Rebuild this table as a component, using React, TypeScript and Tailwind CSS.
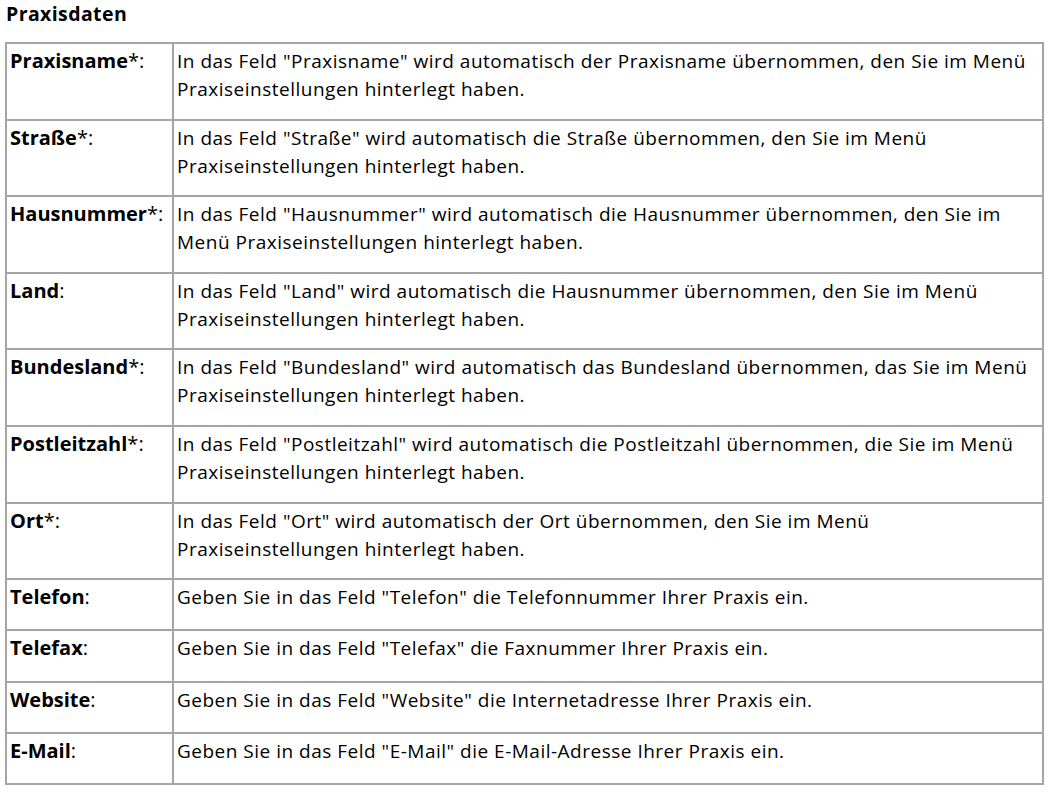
const rows: { label: string; mark: string; text: string; long?: boolean }[] = [
  { label: "Praxisname", mark: "*:", long: true, text: 'In das Feld "Praxisname" wird automatisch der Praxisname übernommen, den Sie im Menü Praxiseinstellungen hinterlegt haben.' },
  { label: "Straße", mark: "*:", long: true, text: 'In das Feld "Straße" wird automatisch die Straße übernommen, den Sie im Menü Praxiseinstellungen hinterlegt haben.' },
  { label: "Hausnummer", mark: "*:", long: true, text: 'In das Feld "Hausnummer" wird automatisch die Hausnummer übernommen, den Sie im Menü Praxiseinstellungen hinterlegt haben.' },
  { label: "Land", mark: ":", long: true, text: 'In das Feld "Land" wird automatisch die Hausnummer übernommen, den Sie im Menü Praxiseinstellungen hinterlegt haben.' },
  { label: "Bundesland", mark: "*:", long: true, text: 'In das Feld "Bundesland" wird automatisch das Bundesland übernommen, das Sie im Menü Praxiseinstellungen hinterlegt haben.' },
  { label: "Postleitzahl", mark: "*:", long: true, text: 'In das Feld "Postleitzahl" wird automatisch die Postleitzahl übernommen, die Sie im Menü Praxiseinstellungen hinterlegt haben.' },
  { label: "Ort", mark: "*:", long: true, text: 'In das Feld "Ort" wird automatisch der Ort übernommen, den Sie im Menü Praxiseinstellungen hinterlegt haben.' },
  { label: "Telefon", mark: ":", text: 'Geben Sie in das Feld "Telefon" die Telefonnummer Ihrer Praxis ein.' },
  { label: "Telefax", mark: ":", text: 'Geben Sie in das Feld "Telefax" die Faxnummer Ihrer Praxis ein.' },
  { label: "Website", mark: ":", text: 'Geben Sie in das Feld "Website" die Internetadresse Ihrer Praxis ein.' },
  { label: "E-Mail", mark: ":", text: 'Geben Sie in das Feld "E-Mail" die E-Mail-Adresse Ihrer Praxis ein.' },
];

export default function App() {
  return (
    <div className="w-[1050px] h-[796px] bg-white text-black font-['Open_Sans','Liberation_Sans',sans-serif] pl-[5px] pt-[2px]">
      <h2 className="text-[19.5px] font-bold leading-[24px] tracking-[0.4px] pl-[1px] mb-[16px]">Praxisdaten</h2>
      <table className="w-[1039px] border-collapse border-2 border-[#a5a5a5]">
        <tbody>
          {rows.map((r) => (
            <tr key={r.label} className="border-b-2 border-[#a5a5a5]">
              <td
                className={`w-[167px] align-top border-r-2 border-[#a5a5a5] pl-[3px] pt-[3px] text-[20px] leading-[28px] whitespace-nowrap ${r.long ? "pb-[15.6px]" : "pb-[18.2px]"}`}
              >
                <span className="font-bold">{r.label}</span>
                {r.mark}
              </td>
              <td
                className={`align-top pl-[3px] pr-[12px] pt-[3px] text-[19px] leading-[28px] tracking-[0.5px] ${r.long ? "pb-[15.6px]" : "pb-[18.2px]"}`}
              >
                {r.text}
              </td>
            </tr>
          ))}
        </tbody>
      </table>
    </div>
  );
}
